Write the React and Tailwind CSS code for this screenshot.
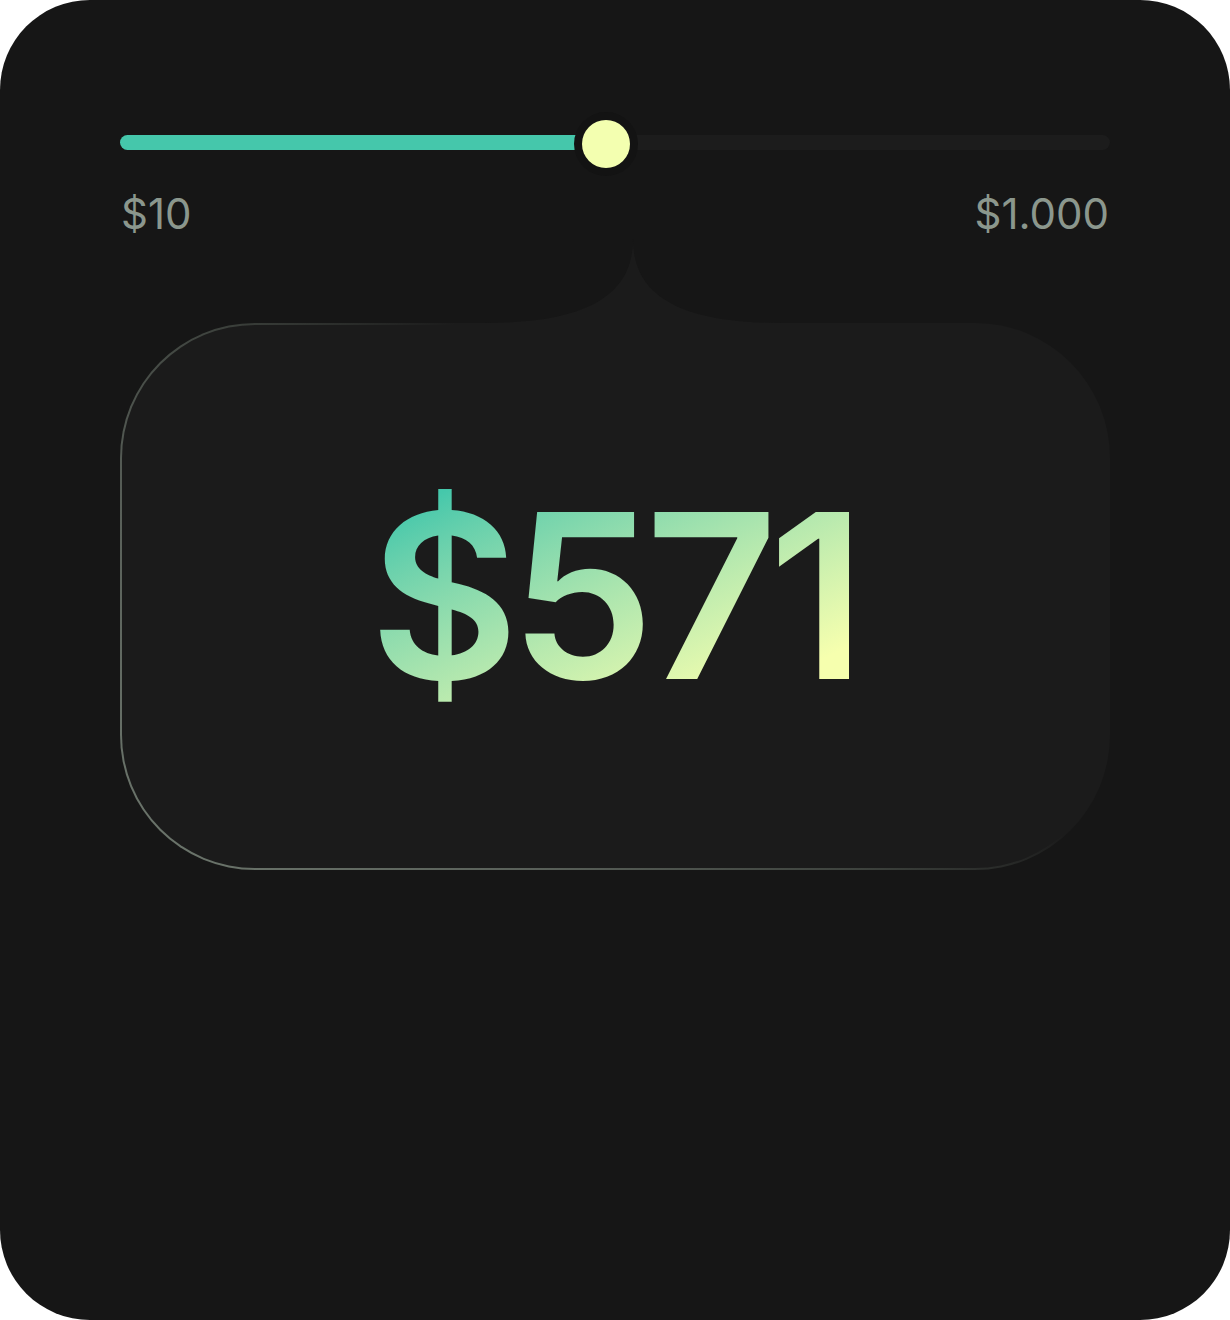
export default function App() {
  return (
    <div className="w-[1230px] h-[1320px] bg-white">
      <div className="w-full h-full rounded-[90px] bg-[#161616] overflow-hidden px-[120px] pt-[120px] font-['Inter',sans-serif]">
        {/* slider */}
        <div className="relative h-[48px]">
          <div className="absolute left-0 right-0 top-[15px] h-[15px] rounded-full bg-[#1c1c1c]" />
          <div className="absolute left-0 w-[486px] top-[15px] h-[15px] rounded-full bg-[#45c7ab]" />
          <div className="absolute left-[454px] top-[-8px] w-[64px] h-[64px] rounded-full bg-[#131313] flex items-center justify-center">
            <div className="w-[48px] h-[48px] rounded-full bg-[#f3ffb0]" />
          </div>
        </div>
        <div className="flex justify-between mt-[25px] text-[42px] leading-none text-[#8b978d] px-[1px]">
          <span>$10</span>
          <span>$1.000</span>
        </div>
        {/* bubble */}
        <div className="relative mt-[88px]">
          <svg className="absolute left-[363px] top-[-84px]" width="300" height="88" viewBox="0 0 300 88">
            <path d="M0,84 C90,84 150,64 150,0 C150,64 210,84 300,84 L300,88 L0,88 Z" fill="#1b1b1b" />
          </svg>
          <div className="relative h-[547px] rounded-[135px] border-[2px] border-transparent [background:linear-gradient(#1b1b1b,#1b1b1b)_padding-box,linear-gradient(40deg,#6e786e_0%,#5a615a_25%,#3e433e_45%,#1b1b1b_60%)_border-box] flex items-center justify-center">
            <span className="text-[230px] leading-none font-semibold tracking-[-0.04em] bg-linear-to-br from-[#45c8ab] from-10% to-[#f6ffae] to-85% bg-clip-text text-transparent pr-[4px] mt-[-4px]">
              $571
            </span>
          </div>
        </div>
      </div>
    </div>
  );
}
